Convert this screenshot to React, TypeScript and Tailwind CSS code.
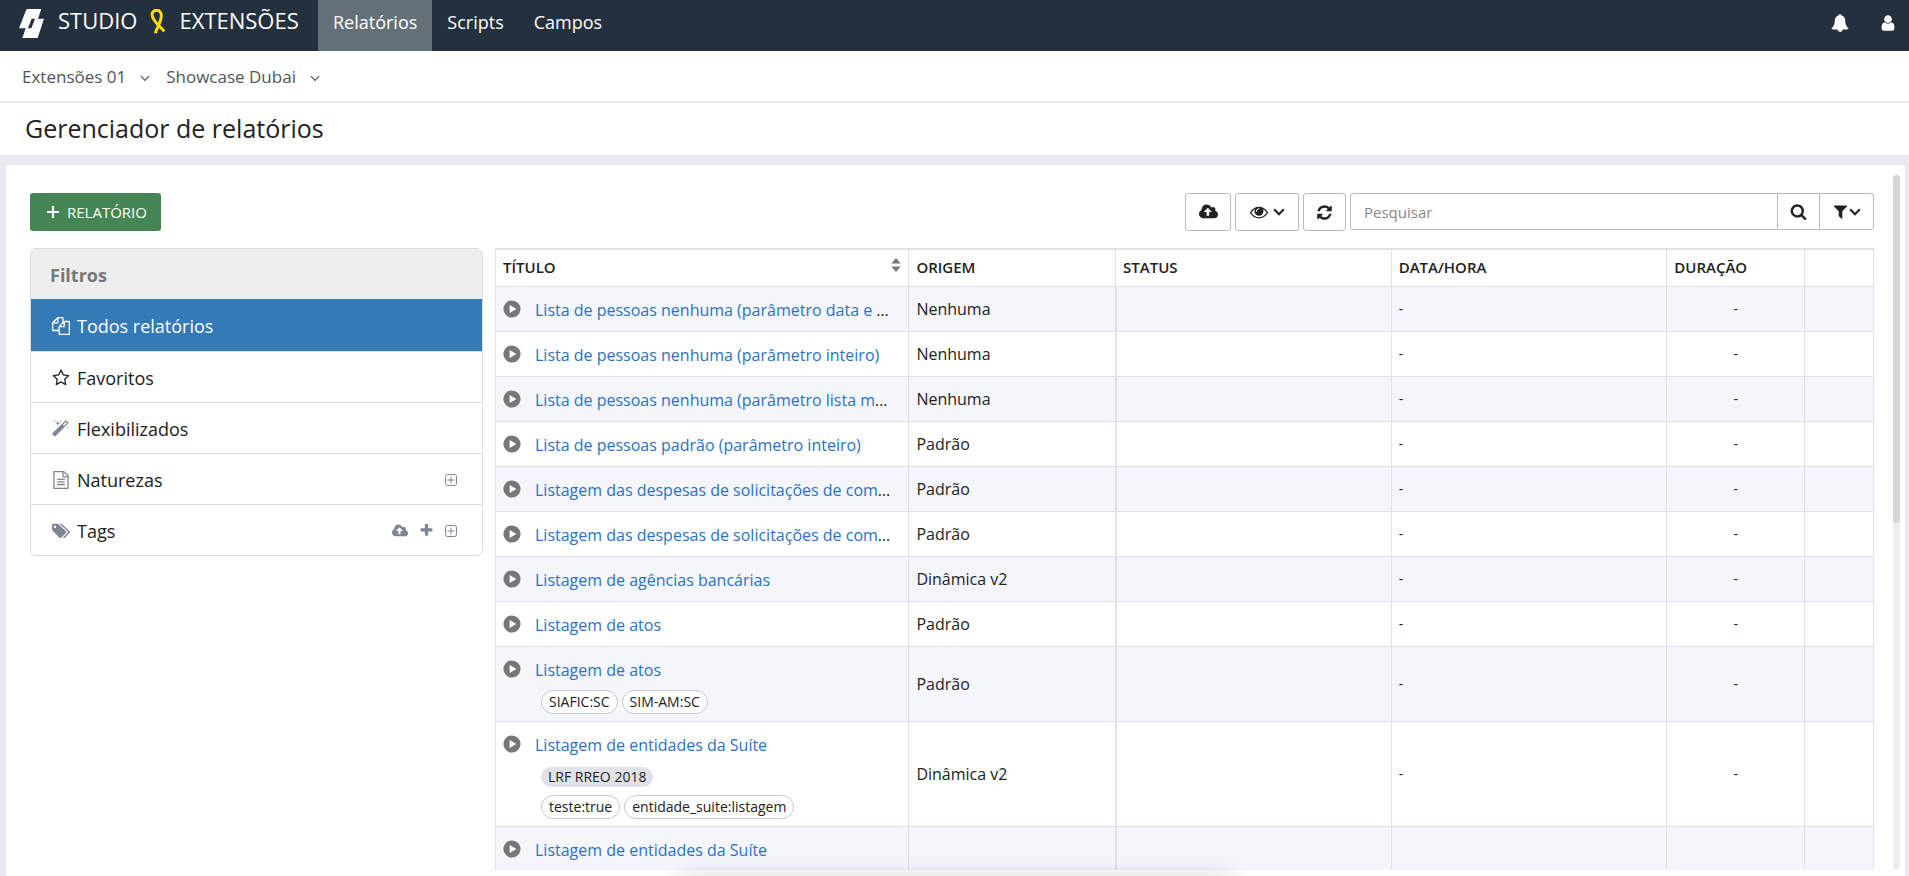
import type { ReactNode } from "react";

interface IconProps {
  d: string;
  className: string;
  wide?: boolean;
}

function Icon({ d, className, wide }: IconProps) {
  return (
    <svg viewBox={wide ? "0 0 1920 1792" : "0 0 1792 1792"} className={className} fill="currentColor" aria-hidden="true">
      <path d={d} />
    </svg>
  );
}

const icons = {
  bell: "M912 1696q0-16-16-16-59 0-101.5-42.5t-42.5-101.5q0-16-16-16t-16 16q0 73 51.5 124.5t124.5 51.5q16 0 16-16zm816-288q0 52-38 90t-90 38h-448q0 106-75 181t-181 75-181-75-75-181h-448q-52 0-90-38t-38-90q50-42 91-88t85-119.5 74.5-158.5 50-206 19.5-260q0-152 117-282.5t307-158.5q-8-19-8-39 0-40 28-68t68-28 68 28 28 68q0 20-8 39 190 28 307 158.5t117 282.5q0 139 19.5 260t50 206 74.5 158.5 85 119.5 91 88z",
  user: "M1536 1399q0 109-62.5 187t-150.5 78h-854q-88 0-150.5-78t-62.5-187q0-85 8.5-160.5t31.5-152 58.5-131 94-89 134.5-34.5q131 128 313 128t313-128q76 0 134.5 34.5t94 89 58.5 131 31.5 152 8.5 160.5zm-256-887q0 159-112.5 271.5t-271.5 112.5-271.5-112.5-112.5-271.5 112.5-271.5 271.5-112.5 271.5 112.5 112.5 271.5z",
  cloud: "M1280 864q0-14-9-23l-352-352q-9-9-23-9t-23 9l-351 351q-10 12-10 24 0 14 9 23t23 9h224v352q0 13 9.5 22.5t22.5 9.5h192q13 0 22.5-9.5t9.5-22.5v-352h224q13 0 22.5-9.5t9.5-22.5zm640 288q0 159-112.5 271.5t-271.5 112.5h-1088q-185 0-316.5-131.5t-131.5-316.5q0-130 70-240t188-165q-2-30-2-43 0-212 150-362t362-150q156 0 285.5 87t188.5 231q71-62 166-62 106 0 181 75t75 181q0 76-41 138 130 31 213.5 135.5t83.5 238.5z",
  eye: "M1664 960q-152-236-381-353 61 104 61 225 0 185-131.5 316.5t-316.5 131.5-316.5-131.5-131.5-316.5q0-121 61-225-229 117-381 353 133 205 333.5 326.5t434.5 121.5 434.5-121.5 333.5-326.5zm-720-384q0-20-14-34t-34-14q-125 0-214.5 89.5t-89.5 214.5q0 20 14 34t34 14 34-14 14-34q0-86 61-147t147-61q20 0 34-14t14-34zm848 384q0 34-20 69-140 230-376.5 368.5t-499.5 138.5-499.5-139-376.5-368q-20-35-20-69t20-69q140-229 376.5-368t499.5-139 499.5 139 376.5 368q20 35 20 69z",
  refresh: "M1639 1056q0 5-1 7-64 268-268 434.5t-478 166.5q-146 0-282.5-55t-243.5-157l-129 129q-19 19-45 19t-45-19-19-45v-448q0-26 19-45t45-19h448q26 0 45 19t19 45-19 45l-137 137q71 66 161 102t187 36q134 0 250-65t186-179q11-17 53-117 8-23 30-23h192q13 0 22.5 9.5t9.5 22.5zm25-800v448q0 26-19 45t-45 19h-448q-26 0-45-19t-19-45 19-45l138-138q-148-137-349-137-134 0-250 65t-186 179q-11 17-53 117-8 23-30 23h-199q-13 0-22.5-9.5t-9.5-22.5v-7q65-268 270-434.5t480-166.5q146 0 284 55.5t245 156.5l130-129q19-19 45-19t45 19 19 45z",
  search: "M1216 832q0-185-131.5-316.5t-316.5-131.5-316.5 131.5-131.5 316.5 131.5 316.5 316.5 131.5 316.5-131.5 131.5-316.5zm512 832q0 52-38 90t-90 38q-54 0-90-38l-343-342q-179 124-399 124-143 0-273.5-55.5t-225-150-150-225-55.5-273.5 55.5-273.5 150-225 225-150 273.5-55.5 273.5 55.5 225 150 150 225 55.5 273.5q0 220-124 399l343 343q37 37 37 90z",
  filter: "M1595 295q17 41-14 70l-493 493v742q0 42-39 59-13 5-25 5-27 0-45-19l-256-256q-19-19-19-45v-486l-493-493q-31-29-14-70 17-39 59-39h1280q42 0 59 39z",
  plus: "M1600 736v192q0 40-28 68t-68 28h-416v416q0 40-28 68t-68 28h-192q-40 0-68-28t-28-68v-416h-416q-40 0-68-28t-28-68v-192q0-40 28-68t68-28h416v-416q0-40 28-68t68-28h192q40 0 68 28t28 68v416h416q40 0 68 28t28 68z",
  files: "M1696 384q40 0 68 28t28 68v1216q0 40-28 68t-68 28h-960q-40 0-68-28t-28-68v-288h-544q-40 0-68-28t-28-68v-672q0-40 20-88t48-76l408-408q28-28 76-48t88-20h416q40 0 68 28t28 68v328q68-40 128-40h416zm-544 213l-299 299h299v-299zm-640-384l-299 299h299v-299zm196 647l316-316v-416h-384v416q0 40-28 68t-68 28h-416v640h512v-256q0-40 20-88t48-76zm956 804v-1152h-384v416q0 40-28 68t-68 28h-416v640h896z",
  star: "M1201 1004l306-297-422-62-189-382-189 382-422 62 306 297-73 421 378-199 377 199zm527-357q0 22-26 48l-363 354 86 500q1 7 1 20 0 50-41 50-19 0-40-12l-449-236-449 236q-22 12-40 12-21 0-31.5-14.5t-10.5-35.5q0-6 2-20l86-500-364-354q-25-27-25-48 0-37 56-46l502-73 225-455q19-41 49-41t49 41l225 455 502 73q56 9 56 46z",
  magic: "M1190 581l293-293-107-107-293 293zm447-293q0 27-18 45l-1286 1286q-18 18-45 18t-45-18l-198-198q-18-18-18-45t18-45l1286-1286q18-18 45-18t45 18l198 198q18 18 18 45zm-1351-190l98 30-98 30-30 98-30-98-98-30 98-30 30-98zm350 162l196 60-196 60-60 196-60-196-196-60 196-60 60-196zm930 478l98 30-98 30-30 98-30-98-98-30 98-30 30-98zm-640-640l98 30-98 30-30 98-30-98-98-30 98-30 30-98z",
  file: "M1596 380q28 28 48 76t20 88v1152q0 40-28 68t-68 28h-1344q-40 0-68-28t-28-68v-1600q0-40 28-68t68-28h896q40 0 88 20t76 48zm-444-244v376h376q-10-29-22-41l-313-313q-12-12-41-22zm384 1528v-1024h-416q-40 0-68-28t-28-68v-416h-768v1536h1280zm-1024-864q0-14 9-23t23-9h704q14 0 23 9t9 23v64q0 14-9 23t-23 9h-704q-14 0-23-9t-9-23v-64zm736 224q14 0 23 9t9 23v64q0 14-9 23t-23 9h-704q-14 0-23-9t-9-23v-64q0-14 9-23t23-9h704zm0 256q14 0 23 9t9 23v64q0 14-9 23t-23 9h-704q-14 0-23-9t-9-23v-64q0-14 9-23t23-9h704z",
  tags: "M448 448q0-53-37.5-90.5t-90.5-37.5-90.5 37.5-37.5 90.5 37.5 90.5 90.5 37.5 90.5-37.5 37.5-90.5zm1067 576q0 53-37 90l-491 492q-39 37-91 37-53 0-90-37l-715-716q-38-37-64.5-101t-26.5-117v-416q0-52 38-90t90-38h416q53 0 117 26.5t102 64.5l715 714q37 39 37 91zm384 0q0 53-37 90l-491 492q-39 37-91 37-36 0-59-14t-53-45l470-470q37-37 37-90 0-52-37-91l-715-714q-38-38-102-64.5t-117-26.5h224q53 0 117 26.5t102 64.5l715 714q37 39 37 91z",
};

function Chevron({ className }: { className: string }) {
  return (
    <svg viewBox="0 0 12 8" className={className} fill="none" stroke="currentColor" aria-hidden="true">
      <path d="M1.2 1.2 6 6.2l4.8-5" />
    </svg>
  );
}

function PlusBox() {
  return (
    <svg viewBox="0 0 12 12" className="size-3" fill="none" stroke="currentColor" aria-hidden="true">
      <rect x="0.5" y="0.5" width="11" height="11" rx="2" />
      <path d="M6 2.5v7M2.5 6h7" />
    </svg>
  );
}

function Header() {
  return (
    <header className="flex h-[51px] shrink-0 items-center bg-[#23303d] text-white">
      <div className="flex h-full w-[318px] items-center pb-3 pl-[19px] text-[22px] leading-7">
        <svg viewBox="0 0 75 87" className="mt-2 mr-[14px] h-[29px] w-[25px]" fill="currentColor" aria-hidden="true">
          <path fillRule="evenodd" d="M27 0h40L57 29h18L56 87H10l10-29H0L21 4q2-4 6-4zM38 29 27 58h10l11-29z" />
        </svg>
        <span>STUDIO</span>
        <svg viewBox="0 0 46 76" className="mx-[13px] mt-1 h-[25px] w-[16px]" fill="none" stroke="#ffdd00" strokeWidth="9" aria-hidden="true">
          <path d="M15 74C18 58 33 42 33 20 33 10 27 4 19 4S4 10 5 18c2 20 24 34 37 50" />
        </svg>
        <span>EXTENSÕES</span>
      </div>
      <nav className="flex h-full text-lg leading-6">
        <a href="#relatorios" className="flex items-center bg-[#656f78] px-[15px] pb-[7px]">Relatórios</a>
        <a href="#scripts" className="flex items-center px-[15px] pb-[7px]">Scripts</a>
        <a href="#campos" className="flex items-center px-[15px] pb-[7px]">Campos</a>
      </nav>
      <div className="ml-auto flex items-center gap-[30px] pr-3 pb-[6px]">
        <button aria-label="Notificações"><Icon d={icons.bell} className="size-[18px]" /></button>
        <button aria-label="Usuário"><Icon d={icons.user} className="size-[18px]" /></button>
      </div>
    </header>
  );
}

interface FilterProps {
  icon: string;
  label: string;
  tone?: string;
  active?: boolean;
  wide?: boolean;
  children?: ReactNode;
}

function FilterItem({ icon, label, tone = "text-[#7f8591]", active, wide, children }: FilterProps) {
  return (
    <li className={active ? "flex h-[52px] items-center bg-[#337ab7] pt-px pr-[25px] pl-5 text-white" : "flex h-[51px] items-center border-t border-[#dddddd] pt-px pr-[25px] pl-5 text-[#222222]"}>
      <a href={`#${label}`} className="flex flex-1 items-center gap-[6px]">
        <span className={active ? "flex w-5 justify-center text-white" : `flex w-5 justify-center ${tone}`}>
          <Icon d={icon} wide={wide} className="size-[18px]" />
        </span>
        {label}
      </a>
      {children && <div className="flex items-center gap-[11px] text-[#7f8591]">{children}</div>}
    </li>
  );
}

function Sidebar() {
  return (
    <aside className="w-[453px] shrink-0 self-start overflow-hidden rounded-md border border-[#dddddd] text-lg leading-6">
      <h2 className="flex h-[50px] items-center bg-[#eeeeee] pt-[2px] pl-[19px] font-bold text-[#777777]">Filtros</h2>
      <ul>
        <FilterItem icon={icons.files} label="Todos relatórios" active />
        <FilterItem icon={icons.star} label="Favoritos" tone="text-[#222222]" />
        <FilterItem icon={icons.magic} label="Flexibilizados" />
        <FilterItem icon={icons.file} label="Naturezas">
          <button aria-label="Expandir naturezas"><PlusBox /></button>
        </FilterItem>
        <FilterItem icon={icons.tags} label="Tags" wide>
          <button aria-label="Importar tags"><Icon d={icons.cloud} wide className="size-4" /></button>
          <button aria-label="Nova tag"><Icon d={icons.plus} className="size-[15px]" /></button>
          <button aria-label="Expandir tags"><PlusBox /></button>
        </FilterItem>
      </ul>
    </aside>
  );
}

interface Report {
  title: string;
  origin: string;
  nature?: string;
  tags?: string[];
  blank?: boolean;
}

const reports: Report[] = [
  { title: "Lista de pessoas nenhuma (parâmetro data e hora)", origin: "Nenhuma" },
  { title: "Lista de pessoas nenhuma (parâmetro inteiro)", origin: "Nenhuma" },
  { title: "Lista de pessoas nenhuma (parâmetro lista módulo)", origin: "Nenhuma" },
  { title: "Lista de pessoas padrão (parâmetro inteiro)", origin: "Padrão" },
  { title: "Listagem das despesas de solicitações de compra", origin: "Padrão" },
  { title: "Listagem das despesas de solicitações de compra", origin: "Padrão" },
  { title: "Listagem de agências bancárias", origin: "Dinâmica v2" },
  { title: "Listagem de atos", origin: "Padrão" },
  { title: "Listagem de atos", origin: "Padrão", tags: ["SIAFIC:SC", "SIM-AM:SC"] },
  { title: "Listagem de entidades da Suíte", origin: "Dinâmica v2", nature: "LRF RREO 2018", tags: ["teste:true", "entidade_suite:listagem"] },
  { title: "Listagem de entidades da Suíte", origin: "", blank: true },
];

function ReportRow({ report }: { report: Report }) {
  return (
    <tr className="h-[45px] odd:bg-[#f5f6fb]">
      <td className="border border-[#e1e2e8] pt-[11px] pr-[14px] pb-[7px] pl-[7px] align-top">
        <div className="flex items-center gap-[14px]">
          <button aria-label="Executar" className="shrink-0 pb-[2px]">
            <svg viewBox="0 0 18 18" className="size-[18px]" aria-hidden="true">
              <circle cx="9" cy="9" r="8.6" fill="#777777" />
              <path d="M6.6 5v8l6.8-4z" fill="#ffffff" />
            </svg>
          </button>
          <div className="min-w-0 flex-1 truncate leading-6">
            <a href="#relatorio" className="text-[#2b72c4]">{report.title}</a>
          </div>
        </div>
        {report.nature && (
          <div className="mt-[10px] flex pl-[38px] text-sm leading-5">
            <span className="rounded-full bg-[#e1e2e7] px-[7px]">{report.nature}</span>
          </div>
        )}
        {report.tags && (
          <div className="mt-2 flex gap-1 pl-[38px] text-sm leading-[22px]">
            {report.tags.map((tag) => (
              <span key={tag} className="rounded-full border border-[#c8c8c8] bg-white px-[7px]">{tag}</span>
            ))}
          </div>
        )}
      </td>
      <td className="border border-r-2 border-[#e1e2e8] px-[7px] leading-6">{report.origin}</td>
      <td className="border border-[#e1e2e8]" />
      <td className="border border-[#e1e2e8] px-[7px] text-sm">{!report.blank && "-"}</td>
      <td className="border border-[#e1e2e8] text-center text-sm">{!report.blank && "-"}</td>
      <td className="border border-[#e1e2e8]" />
    </tr>
  );
}

function ReportTable() {
  return (
    <table className="w-full min-w-0 flex-1 table-fixed border-collapse text-base text-[#222222]">
      <thead>
        <tr className="h-[37px] border-t-2 border-[#e1e2e8] text-left text-[15px] leading-6 *:border *:border-t-2 *:border-[#e1e2e8] *:px-[7px] *:pb-[2px] *:font-semibold">
          <th className="w-[30%]">
            <div className="flex items-center justify-between">
              TÍTULO
              <svg viewBox="0 0 10 14" className="mb-1 h-[14px] w-[10px]" fill="#777777" aria-hidden="true">
                <path d="M5 0l4.6 5.6H.4zM5 14l4.6-5.6H.4z" />
              </svg>
            </div>
          </th>
          <th className="w-[15%]">ORIGEM</th>
          <th className="w-[20%]">STATUS</th>
          <th className="w-[20%]">DATA/HORA</th>
          <th className="w-[10%]">DURAÇÃO</th>
          <th className="w-[5%]" />
        </tr>
      </thead>
      <tbody>
        {reports.map((report, i) => <ReportRow key={i} report={report} />)}
      </tbody>
    </table>
  );
}

function Toolbar() {
  return (
    <div className="flex items-start justify-between text-[#222222]">
      <button className="flex h-[38px] items-center gap-[7px] rounded-[3px] bg-[#448553] px-[14px] text-[15px] text-white">
        <svg viewBox="0 0 14 14" className="ml-[2px] size-[14px]" fill="none" stroke="currentColor" strokeWidth="2.2" aria-hidden="true">
          <path d="M7 1v12M1 7h12" />
        </svg>
        RELATÓRIO
      </button>
      <div className="flex items-start gap-1">
        <button aria-label="Importar" className="flex h-[38px] w-[46px] items-center justify-center rounded-[3px] border border-[#bbbbbb]">
          <Icon d={icons.cloud} wide className="h-[18px] w-[19px]" />
        </button>
        <button aria-label="Exibir" className="flex h-[38px] w-16 items-center justify-center gap-[5px] rounded-[3px] border border-[#bbbbbb]">
          <Icon d={icons.eye} className="size-[18px]" />
          <Chevron className="h-2 w-3 stroke-2" />
        </button>
        <button aria-label="Atualizar" className="flex h-[38px] w-[43px] items-center justify-center rounded-[3px] border border-[#bbbbbb]">
          <Icon d={icons.refresh} className="size-[17px]" />
        </button>
        <form className="flex h-[37px] rounded-[3px] border border-[#bbbbbb]">
          <input aria-label="Pesquisar" placeholder="Pesquisar" className="w-[426px] bg-transparent px-[13px] pt-[2px] text-[15px] outline-none placeholder:text-[#888888]" />
          <button type="button" aria-label="Buscar" className="flex w-[42px] items-center justify-center border-l border-[#bbbbbb]">
            <Icon d={icons.search} className="size-[17px]" />
          </button>
          <button type="button" aria-label="Filtrar" className="flex w-[54px] items-center justify-center border-l border-[#bbbbbb]">
            <Icon d={icons.filter} className="size-[17px]" />
            <Chevron className="h-2 w-3 stroke-2" />
          </button>
        </form>
      </div>
    </div>
  );
}

export default function App() {
  return (
    <div className="relative flex h-screen flex-col overflow-hidden bg-[#e9eaef] font-['Open_Sans','Noto_Sans',sans-serif]">
      <Header />
      <div className="flex h-[52px] shrink-0 items-center gap-4 border-b-2 border-[#e9eaef] bg-white pt-[2px] pl-[22px] text-[17px] text-[#555555]">
        <button className="flex items-center gap-[14px]">Extensões 01 <Chevron className="mt-[2px] h-[7px] w-[10px] stroke-[1.5]" /></button>
        <button className="flex items-center gap-[14px]">Showcase Dubai <Chevron className="mt-[2px] h-[7px] w-[10px] stroke-[1.5]" /></button>
      </div>
      <div className="flex h-[52px] shrink-0 items-center bg-white pl-[25px]">
        <h1 className="text-[25px] text-[#222222]">Gerenciador de relatórios</h1>
      </div>
      <main className="relative mx-1 mt-[10px] ml-[6px] flex min-h-0 flex-1 flex-col rounded-t-[3px] bg-white pb-[6px]">
        <div className="min-h-0 flex-1 overflow-hidden pt-7 pr-[31px] pl-6">
          <Toolbar />
          <div className="mt-[17px] flex items-start gap-3">
            <Sidebar />
            <ReportTable />
          </div>
        </div>
        <div className="absolute top-[10px] right-[5px] bottom-[6px] w-[7px] rounded-full bg-[#eeeeee]">
          <div className="h-1/2 rounded-full bg-[#d5d5d5]" />
        </div>
      </main>
      <div className="absolute -bottom-5 left-1/2 h-4 w-[560px] -translate-x-1/2 rounded-full shadow-[0_0_24px_rgba(0,0,0,0.22)]" />
    </div>
  );
}
